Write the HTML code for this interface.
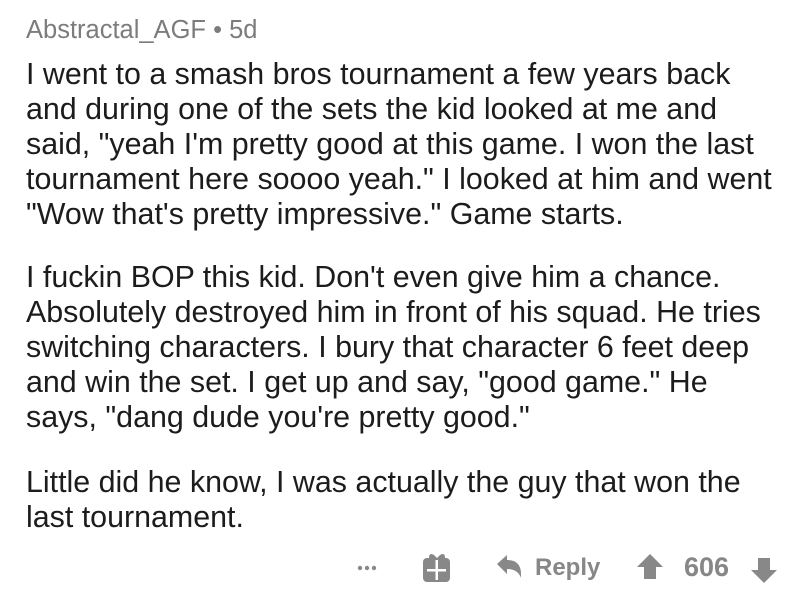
<!DOCTYPE html>
<html><head><style>
body{margin:0;width:800px;height:608px;background:#fff;font-family:"Liberation Sans",sans-serif;overflow:hidden;position:relative}
.h{position:absolute;left:26px;top:16px;font-size:25.5px;color:#7c7c7c;white-space:nowrap}
.l{position:absolute;left:26px;font-size:30.4px;color:#1c1c1c;white-space:nowrap;line-height:35px}
.g{position:absolute;color:#878787;font-size:24px;font-weight:bold}
</style></head><body>
<div class="h">Abstractal_AGF • 5d</div>
<div class="l" style="top:57px">I went to a smash bros tournament a few years back</div>
<div class="l" style="top:92px">and during one of the sets the kid looked at me and</div>
<div class="l" style="top:127px">said, "yeah I'm pretty good at this game. I won the last</div>
<div class="l" style="top:162px">tournament here soooo yeah." I looked at him and went</div>
<div class="l" style="top:197px">"Wow that's pretty impressive." Game starts.</div>
<div class="l" style="top:260px">I fuckin BOP this kid. Don't even give him a chance.</div>
<div class="l" style="top:295px">Absolutely destroyed him in front of his squad. He tries</div>
<div class="l" style="top:330px">switching characters. I bury that character 6 feet deep</div>
<div class="l" style="top:365px">and win the set. I get up and say, "good game." He</div>
<div class="l" style="top:400px">says, "dang dude you're pretty good."</div>
<div class="l" style="top:465px">Little did he know, I was actually the guy that won the</div>
<div class="l" style="top:500px">last tournament.</div>
<svg style="position:absolute;left:355px;top:550px" width="440" height="40">
<g fill="#888">
<circle cx="5" cy="18" r="2.2"/><circle cx="12" cy="18" r="2.2"/><circle cx="19" cy="18" r="2.2"/>
<rect x="68" y="8" width="27" height="24" rx="4"/>
<path d="M74 8 q0-6 5-3 l3 3 l3-3 q5-3 5 3z"/>
<path d="M142 14 l10-9 v5 q14 0 14 14 v4 q-3-9-14-9 v5z"/>
<path d="M295 4 l13 13 h-7 v12 h-12 v-12 h-7z"/>
<path d="M409 33 l13-13 h-7 v-12 h-12 v12 h-7z"/>
</g>
<rect x="72" y="19" width="19" height="2.5" fill="#fff"/><rect x="80.5" y="10" width="2.5" height="20" fill="#fff"/>
</svg>
<div class="g" style="left:535px;top:554px">Reply</div>
<div class="g" style="left:684px;top:552px;font-size:27px">606</div>
</body></html>
